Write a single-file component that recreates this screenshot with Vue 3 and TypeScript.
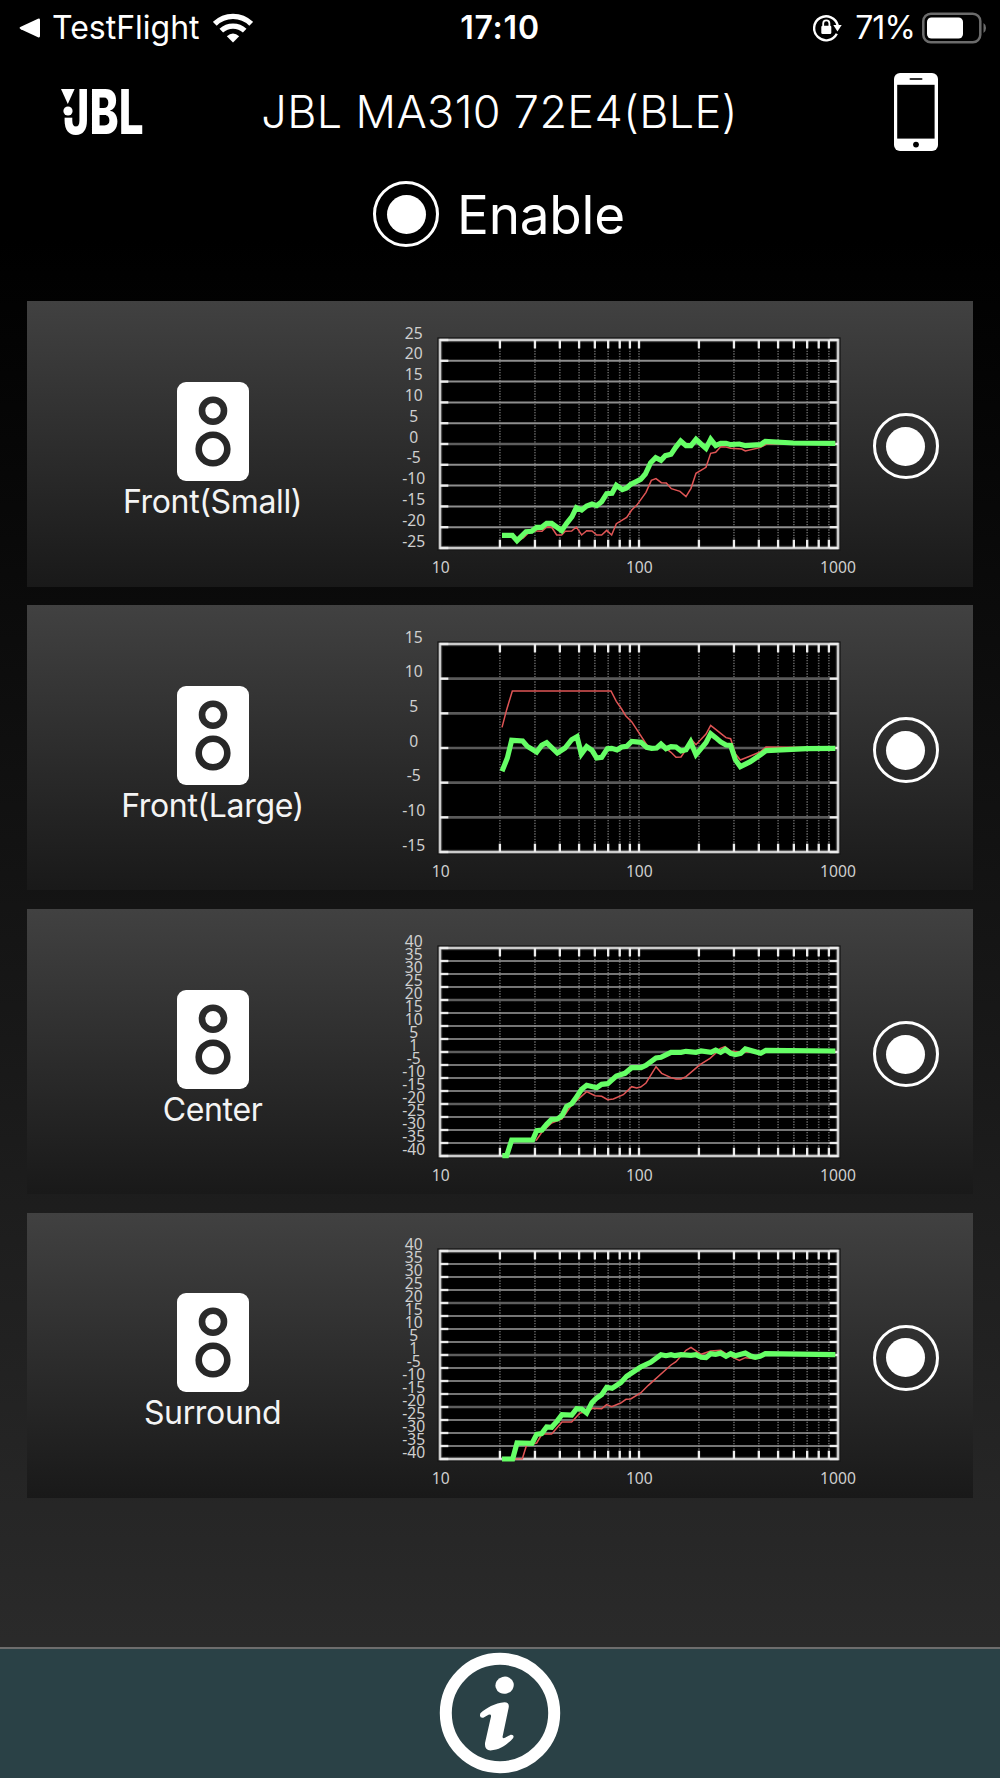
<script setup lang="ts">
interface Channel {
  name: string
  labels: string[]
  dim: number[]
  gridColor: string
  gridWidth: number
  measured: string
  corrected: string
}

// Plot area inside each chart, three drawing units per screen pixel.
const LEFT = 180
const RIGHT = 1374
const TOP = 90
const BOTTOM = 714
const DECADE = 597

const ticks: number[] = []
for (const base of [10, 100]) {
  for (let n = 1; n < 10; n++) {
    if (base * n > 10) ticks.push(LEFT + DECADE * (Math.log10(base * n) - 1))
  }
}

const wide = ['40', '35', '30', '25', '20', '15', '10', '5', '1', '-5', '-10', '-15', '-20', '-25', '-30', '-35', '-40']

const channels: Channel[] = [
  {
    name: 'Front(Small)',
    labels: ['25', '20', '15', '10', '5', '0', '-5', '-10', '-15', '-20', '-25'],
    dim: [5],
    gridColor: '#8e8e8e',
    gridWidth: 6,
    measured:
      '367,676 390,678 411,694 430,684 452,662 486,664 500,651 515,652 530,675 545,675 556,664 575,663 589,651 605,675 620,662 636,663 650,675 665,675 680,661 695,675 709,641 740,622 755,600 770,586 798,547 814,511 828,506 844,518 859,519 874,536 900,544 918,560 933,535 948,490 978,472 992,430 1007,427 1022,410 1038,411 1052,415 1085,417 1096,423 1140,413 1160,402 1366,400',
    corrected:
      '366,676 397,676 411,692 438,665 455,664 470,652 485,652 500,640 515,640 545,662 560,640 576,620 589,593 605,600 620,588 636,582 650,587 665,575 680,551 696,550 709,526 727,539 740,534 752,523 782,508 796,492 812,458 827,443 843,451 856,437 873,433 887,412 902,393 918,407 933,407 948,388 963,402 978,415 992,388 1007,407 1022,400 1038,400 1052,404 1078,402 1096,407 1142,404 1156,394 1240,399 1366,400',
  },
  {
    name: 'Front(Large)',
    labels: ['15', '10', '5', '0', '-5', '-10', '-15'],
    dim: [],
    gridColor: '#5a5a5a',
    gridWidth: 8,
    measured:
      '366,340 380,287 397,231 693,231 709,262 725,285 737,305 755,323 800,392 815,403 843,392 873,415 888,430 903,429 918,407 932,374 948,392 978,360 992,334 1007,346 1022,358 1038,371 1052,374 1066,419 1081,438 1111,426 1142,413 1158,399 1366,401',
    corrected:
      '366,472 382,432 395,379 428,381 442,397 470,414 485,394 500,386 532,417 555,402 575,377 591,368 604,420 620,398 636,409 650,432 665,430 682,404 695,403 711,408 725,399 740,397 755,382 783,385 800,400 815,403 830,402 843,390 858,404 873,398 888,399 903,411 918,407 932,384 948,422 963,404 978,386 992,359 1007,371 1022,384 1038,393 1052,394 1066,437 1081,458 1111,443 1142,422 1158,410 1220,407 1280,404 1366,403',
  },
  {
    name: 'Center',
    labels: wide,
    dim: [4, 8, 12],
    gridColor: '#9c9c9c',
    gridWidth: 5,
    measured:
      '468,668 486,642 515,615 546,603 575,561 620,521 645,533 665,535 683,545 700,543 730,530 755,506 770,510 782,507 798,495 828,446 845,466 873,479 888,483 903,483 918,476 960,440 990,421 1007,406 1020,392 1035,386 1052,399 1080,402 1366,399',
    corrected:
      '367,713 380,713 395,666 458,666 470,638 486,636 500,619 515,604 532,603 546,593 560,565 575,557 590,536 605,514 620,502 650,509 665,499 683,497 709,474 735,466 755,449 783,449 798,442 828,420 843,418 873,403 903,403 918,400 948,403 963,399 993,403 1007,396 1022,403 1036,394 1052,406 1066,410 1082,406 1096,393 1142,406 1158,397 1366,399',
  },
  {
    name: 'Surround',
    labels: wide,
    dim: [4, 8, 12],
    gridColor: '#9c9c9c',
    gridWidth: 5,
    measured:
      '400,714 427,713 440,671 470,666 486,639 515,639 546,603 575,603 600,576 625,572 636,562 665,563 680,551 695,557 722,546 738,535 752,534 782,516 805,493 873,432 888,422 918,388 933,379 963,400 992,390 1022,388 1038,398 1060,410 1078,418 1096,410 1126,413 1156,401 1366,401',
    corrected:
      '366,714 398,714 411,666 456,667 470,640 485,638 500,618 515,619 530,602 546,581 575,582 590,563 605,564 620,576 636,545 650,531 665,521 680,499 696,502 722,485 740,466 782,438 812,424 843,401 858,404 873,401 885,404 903,401 933,403 948,401 963,409 978,410 992,398 1007,400 1022,396 1038,406 1052,398 1066,404 1096,396 1112,405 1126,409 1140,406 1156,398 1366,401',
  },
]

const rowY = (c: Channel, i: number): number => TOP + ((BOTTOM - TOP) * i) / (c.labels.length - 1)
const xLabels = [
  { x: 182, text: '10' },
  { x: 778, text: '100' },
  { x: 1374, text: '1000' },
]
</script>

<template>
  <div class="screen">
    <div class="status">
      <div class="status-left">
        <svg class="back" width="22" height="20" viewBox="0 0 22 20"><path d="M1.8 8.8 19 .7Q21 0 21 2V18Q21 20 19 19.2L1.8 11.2Q-.6 10 1.8 8.8Z" fill="#fff" /></svg>
        <span class="app-name">TestFlight</span>
        <svg class="wifi" width="40" height="30" viewBox="0 0 40 30" fill="none" stroke="#fff">
          <path d="M1.8 10.8A26 26 0 0 1 38.2 10.8" stroke-width="5.4" />
          <path d="M8.3 17.7A17 17 0 0 1 31.7 17.7" stroke-width="5.2" />
          <path d="M20 29.5 13.8 23.3Q20 17.8 26.2 23.3Z" fill="#fff" stroke="none" />
        </svg>
      </div>
      <div class="clock">17:10</div>
      <div class="status-right">
        <svg class="lock" width="30" height="28" viewBox="0 0 30 28">
          <path d="M23.8 19.8A12 12 0 1 1 24.8 11.5" fill="none" stroke="#fff" stroke-width="2.4" />
          <path d="M20.3 11H28.7L24.5 17.4Z" fill="#fff" />
          <rect x="8.3" y="11.8" width="10" height="8.2" rx="1.3" fill="#fff" />
          <path d="M10.2 12V9.4a3.1 3.1 0 0 1 6.2 0V12" fill="none" stroke="#fff" stroke-width="1.8" />
        </svg>
        <span class="percent">71%</span>
        <svg class="battery" width="65" height="32" viewBox="0 0 65 32">
          <rect x="1.3" y="1.7" width="57" height="28.6" rx="7.5" fill="none" stroke="#6b6b6b" stroke-width="2.5" />
          <rect x="5" y="5.5" width="36" height="21" rx="4.5" fill="#fff" />
          <path d="M61.5 11Q64 12.5 64 16T61.5 21Z" fill="#6b6b6b" />
        </svg>
      </div>
    </div>

    <header class="header">
      <svg class="logo" width="84" height="48" viewBox="0 0 84 48" fill="#fff">
        <path d="M0 0H13.6L6.8 15Z" />
        <circle cx="7" cy="22" r="4.6" />
        <text x="2.5" y="45" font-size="62" textLength="80" lengthAdjust="spacingAndGlyphs">JBL</text>
      </svg>
      <h1 class="title">JBL MA310 72E4(BLE)</h1>
      <svg class="phone" width="44" height="78" viewBox="0 0 44 78">
        <rect width="44" height="78" rx="6" fill="#fff" />
        <rect x="3.2" y="11.8" width="37.4" height="53.8" fill="#000" />
        <rect x="15.5" y="5" width="13" height="2" rx="1" fill="#333" />
        <circle cx="22" cy="71.6" r="2.9" fill="#000" />
      </svg>
    </header>

    <div class="enable">
      <span class="radio"></span>
      <span class="enable-text">Enable</span>
    </div>

    <main class="list">
      <section v-for="c in channels" :key="c.name" class="card">
        <div class="speaker">
          <svg width="72" height="99" viewBox="0 0 72 99">
            <rect width="72" height="99" rx="9" fill="#fff" />
            <circle cx="36" cy="28.7" r="11" fill="none" stroke="#2b2b2b" stroke-width="6.6" />
            <circle cx="36" cy="67" r="14.3" fill="none" stroke="#272727" stroke-width="6.6" />
          </svg>
          <span class="name">{{ c.name }}</span>
        </div>
        <svg class="chart" width="500" height="275" viewBox="0 0 1500 825">
          <rect :x="LEFT" :y="TOP" :width="RIGHT - LEFT" :height="BOTTOM - TOP" fill="#000" stroke="#171717" stroke-width="16" />
          <g stroke="#5c5c5c" stroke-width="5" stroke-dasharray="4 4">
            <line v-for="x in ticks" :key="x" :x1="x" :x2="x" :y1="TOP" :y2="BOTTOM" />
          </g>
          <template v-for="(_, i) in c.labels" :key="i">
            <line
              v-if="i > 0 && i < c.labels.length - 1"
              :x1="LEFT"
              :x2="RIGHT"
              :y1="rowY(c, i)"
              :y2="rowY(c, i)"
              :stroke="c.dim.includes(i) ? '#5e5e5e' : c.gridColor"
              :stroke-width="c.dim.includes(i) ? 8 : c.gridWidth"
            />
          </template>
          <rect :x="LEFT" :y="TOP" :width="RIGHT - LEFT" :height="BOTTOM - TOP" fill="none" stroke="#cbcbcb" stroke-width="8" />
          <g stroke="#ececec" stroke-width="7">
            <template v-for="x in ticks" :key="x">
              <line :x1="x" :x2="x" :y1="TOP" :y2="TOP + 25" />
              <line :x1="x" :x2="x" :y1="BOTTOM" :y2="BOTTOM - 25" />
            </template>
            <template v-for="(_, i) in c.labels" :key="i">
              <line :x1="LEFT" :x2="LEFT + 25" :y1="rowY(c, i)" :y2="rowY(c, i)" />
              <line :x1="RIGHT" :x2="RIGHT - 25" :y1="rowY(c, i)" :y2="rowY(c, i)" />
            </template>
          </g>
          <polyline :points="c.measured" fill="none" stroke="#e05555" stroke-width="4.5" />
          <polyline :points="c.corrected" fill="none" stroke="#66ff66" stroke-width="15.5" />
          <g class="axis">
            <text v-for="(t, i) in c.labels" :key="i" x="101" :y="rowY(c, i) - 4">{{ t }}</text>
            <text v-for="l in xLabels" :key="l.text" :x="l.x" y="789">{{ l.text }}</text>
          </g>
        </svg>
        <span class="radio"></span>
      </section>
    </main>

    <footer class="footer">
      <svg width="122" height="122" viewBox="0 0 122 122">
        <circle cx="61" cy="61" r="54.2" fill="none" stroke="#fff" stroke-width="12" />
        <ellipse cx="65.6" cy="33.2" rx="9.2" ry="8.6" fill="#fff" transform="rotate(-15 65.6 33.2)" />
        <path d="M41.4 61.2C47 56 56 51 65.5 50.2Q70.8 50.2 69.6 56L63.6 84.5Q63.2 87 66 85.8L71.6 82.7Q75.6 82.3 74.2 86C68.5 92.5 61 98 51.5 98.5Q45.4 98.2 46 91L52 64.5Q52.4 61.8 49.5 62.8L44.3 65.8Q39.8 66.4 41.4 61.2Z" fill="#fff" />
      </svg>
    </footer>
  </div>
</template>

<style>
body {
  margin: 0;
  background: #000;
}
</style>

<style scoped>
.screen {
  width: 1000px;
  height: 1778px;
  display: flex;
  flex-direction: column;
  color: #fff;
  font-family: Inter, 'Liberation Sans', sans-serif;
  background: linear-gradient(#000 0, #000 240px, #2a2a2a 1640px);
  overflow: hidden;
}
.status {
  height: 54px;
  display: grid;
  grid-template-columns: 1fr auto 1fr;
  align-items: center;
  font-size: 32px;
  line-height: 56px;
}
.status-left,
.status-right {
  display: flex;
  align-items: center;
}
.status-left {
  padding-left: 19px;
}
.app-name {
  margin-left: 11px;
  width: 148px;
  white-space: nowrap;
}
.wifi {
  margin-left: 13px;
}
.clock {
  font-weight: 600;
  letter-spacing: 0.8px;
}
.status-right {
  justify-content: flex-end;
  padding-right: 13px;
}
.percent {
  margin: 0 7px 0 12px;
  letter-spacing: -0.9px;
}
.header {
  height: 117px;
  padding: 0 62px 0 61px;
  display: grid;
  grid-template-columns: 1fr auto 1fr;
  align-items: center;
}
.logo {
  font-family: Inter, sans-serif;
  font-weight: 800;
  overflow: visible;
}
.title {
  margin: 0 0 2px;
  font-size: 45px;
  font-weight: 300;
  letter-spacing: 0.35px;
  white-space: nowrap;
}
.phone {
  justify-self: end;
  margin-bottom: 2px;
}
.enable {
  height: 130px;
  padding: 10px 0 0 373px;
  display: flex;
  align-items: flex-start;
  box-sizing: border-box;
}
.enable-text {
  margin-left: 18px;
  font-size: 53px;
  line-height: 68px;
  letter-spacing: -0.2px;
}
.radio {
  box-sizing: border-box;
  width: 66px;
  height: 66px;
  border: 3px solid #fff;
  border-radius: 50%;
  display: flex;
  align-items: center;
  justify-content: center;
  flex: none;
}
.radio::before {
  content: '';
  width: 39px;
  height: 39px;
  border-radius: 50%;
  background: #fff;
}
.list {
  padding: 0 26.6px;
  display: flex;
  flex-direction: column;
  gap: 18.4px;
  flex: 1;
}
.card {
  height: 285.5px;
  display: flex;
  align-items: center;
  background: linear-gradient(#414141, #191919);
}
.speaker {
  width: 372px;
  margin-right: -19px;
  padding-top: 17px;
  display: flex;
  flex-direction: column;
  align-items: center;
}
.name {
  font-size: 32px;
  line-height: 42px;
  letter-spacing: -0.35px;
  color: #f4f4f4;
}
.chart {
  margin-top: 7px;
  flex: none;
}
.axis {
  font-family: 'Noto Sans', sans-serif;
  font-size: 47px;
  text-anchor: middle;
  fill: #cfcfcf;
}
.card .radio {
  margin-left: -7px;
  margin-top: 5px;
}
.footer {
  height: 131px;
  box-sizing: border-box;
  border-top: 2px solid #6d6d6d;
  background: #2a4146;
  display: flex;
  justify-content: center;
  padding-top: 3px;
}
</style>
